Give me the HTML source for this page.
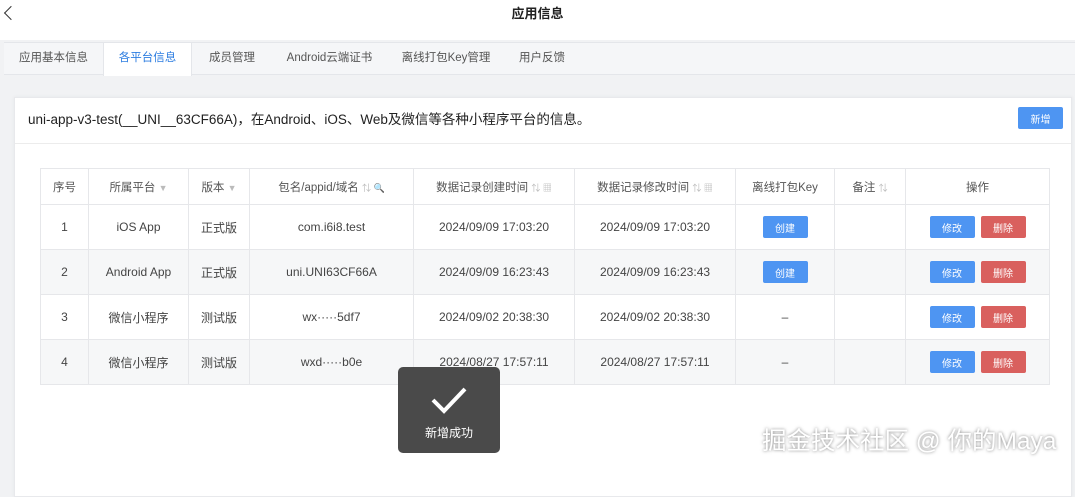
<!DOCTYPE html><html><head><meta charset="utf-8"><style>
*{box-sizing:border-box;margin:0;padding:0}
body{width:1075px;height:470px;overflow:hidden;background:#f1f2f4;font-family:"Liberation Sans","Noto Sans CJK SC",sans-serif;color:#333;position:relative}
.top{position:absolute;left:0;top:0;width:1075px;height:40px;background:#fff;text-align:center;line-height:28px;font-size:13px;font-weight:bold;color:#222}
.back{position:absolute;width:10px;height:10px;border-left:1.5px solid #333;border-bottom:1.5px solid #333;transform:rotate(45deg);left:6px;top:8px}
.tabs{position:absolute;left:4px;top:42px;width:1071px;height:33px;background:#f5f6f8;border-bottom:1px solid #e4e6ea;border-top:1px solid #e4e6ea;font-size:11.5px;color:#555}
.tab{position:absolute;top:0;height:32px;line-height:31px;text-align:center}
.tab.act{background:#fff;color:#2d7de0;border-left:1px solid #e4e6ea;border-right:1px solid #e4e6ea;height:33px}
.card{position:absolute;left:14px;top:97px;width:1058px;height:400px;background:#fff;border:1px solid #e8e9ec;box-shadow:0 0 4px rgba(0,0,0,.05)}
.hd{height:46px;border-bottom:1px solid #ececec;font-size:13.5px;line-height:44px;padding-left:13px;color:#222}
.add{position:absolute;left:1003px;top:9px;width:45px;height:22px;background:#4e95f2;color:#fff;font-size:10px;border-radius:2px;display:flex;align-items:center;justify-content:center}
table{position:absolute;left:25px;top:70px;border-collapse:collapse;font-size:12px;color:#444}
td,th{border:1px solid #e6e7ea;text-align:center;height:45px;font-weight:normal;position:relative}
th{height:36px;color:#555;font-size:11.5px}
tr.g td{background:#f6f7f8}
.b{display:inline-flex;align-items:center;justify-content:center;color:#fff;font-size:10px;width:45px;height:22px;border-radius:2px;background:#4e95f2;margin:0 3px;vertical-align:middle}
.r{background:#d9605e}
.toast{position:absolute;left:398px;top:367px;width:102px;height:86px;background:#4a4a4a;border-radius:5px;color:#fff;font-size:12px;text-align:center}
.wm{position:absolute;left:762px;top:422px;font-size:24.5px;color:#fff;text-shadow:0 0 3px rgba(0,0,0,.5);white-space:nowrap}
.ic{color:#bbb;font-size:9px}
</style></head><body>
<div class="top"><span class="back"></span>应用信息</div>
<div class="tabs">
<div class="tab" style="left:0;width:99px">应用基本信息</div>
<div class="tab act" style="left:99px;width:89px">各平台信息</div>
<div class="tab" style="left:188px;width:80px">成员管理</div>
<div class="tab" style="left:268px;width:115px">Android云端证书</div>
<div class="tab" style="left:383px;width:118px">离线打包Key管理</div>
<div class="tab" style="left:501px;width:74px">用户反馈</div>
</div>
<div class="card">
<div class="hd">uni-app-v3-test(__UNI__63CF66A)，在Android、iOS、Web及微信等各种小程序平台的信息。</div>
<div class="add">新增</div>
<table>
<tr><th style="width:48px">序号</th><th style="width:100px">所属平台 <span class="ic">▼</span></th><th style="width:61px">版本 <span class="ic">▼</span></th><th style="width:164px">包名/appid/域名 <span class="ic">⇅ 🔍</span></th><th style="width:161px">数据记录创建时间 <span class="ic">⇅ ▦</span></th><th style="width:161px">数据记录修改时间 <span class="ic">⇅ ▦</span></th><th style="width:99px">离线打包Key</th><th style="width:71px">备注 <span class="ic">⇅</span></th><th style="width:144px">操作</th></tr>
<tr><td>1</td><td>iOS App</td><td>正式版</td><td>com.i6i8.test</td><td>2024/09/09 17:03:20</td><td>2024/09/09 17:03:20</td><td><span class="b">创建</span></td><td></td><td><span class="b">修改</span><span class="b r">删除</span></td></tr>
<tr class="g"><td>2</td><td>Android App</td><td>正式版</td><td>uni.UNI63CF66A</td><td>2024/09/09 16:23:43</td><td>2024/09/09 16:23:43</td><td><span class="b">创建</span></td><td></td><td><span class="b">修改</span><span class="b r">删除</span></td></tr>
<tr><td>3</td><td>微信小程序</td><td>测试版</td><td>wx·····5df7</td><td>2024/09/02 20:38:30</td><td>2024/09/02 20:38:30</td><td>–</td><td></td><td><span class="b">修改</span><span class="b r">删除</span></td></tr>
<tr class="g"><td>4</td><td>微信小程序</td><td>测试版</td><td>wxd·····b0e</td><td>2024/08/27 17:57:11</td><td>2024/08/27 17:57:11</td><td>–</td><td></td><td><span class="b">修改</span><span class="b r">删除</span></td></tr>
</table>
</div>
<div class="toast"><svg width="40" height="30" style="margin-top:18px" viewBox="0 0 40 30"><path d="M4 15 L15 26 L36 4" stroke="#fff" stroke-width="4" fill="none"/></svg><div style="margin-top:6px">新增成功</div></div>
<div class="wm">掘金技术社区 @ 你的Maya</div>
</body></html>
